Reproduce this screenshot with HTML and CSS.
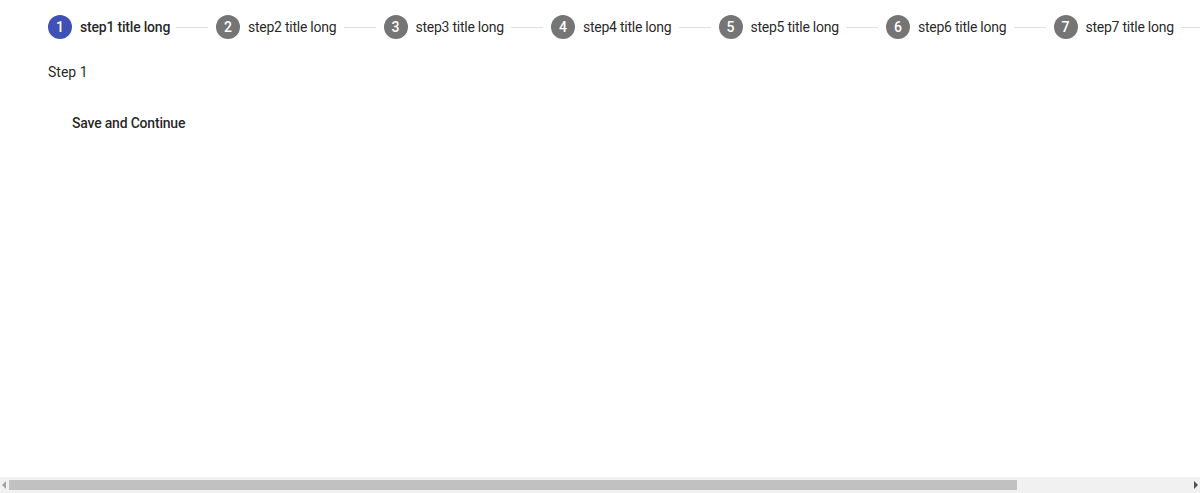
FILE: index.html
```html
<!DOCTYPE html>
<html>
<head>
    <link rel="stylesheet" href="styles.css">
</head>
<body>
    <div class="stepper">
        <div class="stepper-header">
            <div class="step step-selected">
                <div class="step-icon">1</div>
                <div class="step-label">step1 title long</div>
            </div>
            <div class="step-line"></div>
            <div class="step">
                <div class="step-icon">2</div>
                <div class="step-label">step2 title long</div>
            </div>
            <div class="step-line"></div>
            <div class="step">
                <div class="step-icon">3</div>
                <div class="step-label">step3 title long</div>
            </div>
            <div class="step-line"></div>
            <div class="step">
                <div class="step-icon">4</div>
                <div class="step-label">step4 title long</div>
            </div>
            <div class="step-line"></div>
            <div class="step">
                <div class="step-icon">5</div>
                <div class="step-label">step5 title long</div>
            </div>
            <div class="step-line"></div>
            <div class="step">
                <div class="step-icon">6</div>
                <div class="step-label">step6 title long</div>
            </div>
            <div class="step-line"></div>
            <div class="step">
                <div class="step-icon">7</div>
                <div class="step-label">step7 title long</div>
            </div>
            <div class="step-line"></div>
        </div>

        <div class="step-content">
            <div class="step-text">Step 1</div>
            <div class="step-actions">
                <button class="btn" type="button">Save and Continue</button>
            </div>
        </div>
    </div>

    <!-- horizontal scrollbar of the page -->
    <div class="hscroll">
        <span class="hscroll-arrow hscroll-left"></span>
        <div class="hscroll-track">
            <div class="hscroll-thumb"></div>
        </div>
        <span class="hscroll-arrow hscroll-right"></span>
    </div>
</body>
</html>
```

FILE: styles.css
```css
html, body {
    margin: 0;
    height: 100%;
    overflow: hidden;
    background-color: #fff;
}
body {
    font-family: Roboto, "Liberation Sans", sans-serif;
    font-size: 14px;
    color: rgba(0, 0, 0, .87);
}
.stepper {
    width: 1408px;
}
.stepper-header {
    display: flex;
    align-items: center;
    height: 54px;
    padding: 0 24px;
}
.step {
    display: flex;
    align-items: center;
    flex-shrink: 0;
    padding: 0 24px;
    height: 54px;
}
.step-icon {
    width: 24px;
    height: 24px;
    border-radius: 50%;
    background-color: rgba(0, 0, 0, .54);
    color: #fff;
    font-size: 14px;
    font-weight: 500;
    display: flex;
    align-items: center;
    justify-content: center;
    margin-right: 8px;
}
.step-selected .step-icon {
    background-color: #3f51b5;
}
.step-label {
    white-space: nowrap;
    line-height: 20px;
    width: 87.5px;
    letter-spacing: -0.25px;
}
.step-selected .step-label {
    font-weight: 500;
    width: 90px;
    letter-spacing: -0.2px;
}
.step-line {
    flex: 0 0 32px;
    margin: 0 -16px;
    border-top: 1px solid rgba(0, 0, 0, .12);
}
.step-selected + .step-line {
    margin-left: -18px;
}
.step-content {
    padding: 8px 48px 24px;
}
.step-text {
    line-height: 20px;
}
.step-actions {
    margin-top: 23px;
}
.btn {
    font-family: inherit;
    font-size: 14px;
    font-weight: 500;
    letter-spacing: -0.2px;
    color: rgba(0, 0, 0, .87);
    background: transparent;
    border: 0;
    height: 36px;
    padding: 0 16px;
    margin-left: 8px;
    cursor: pointer;
}

/* scrollbar */
.hscroll {
    position: fixed;
    left: 0;
    right: 0;
    bottom: 0;
    height: 16px;
    display: flex;
    align-items: center;
    background-color: #f1f1f1;
}
.hscroll-track {
    flex: 1;
    height: 10px;
    padding: 0 1px;
}
.hscroll-thumb {
    width: 1008px;
    height: 100%;
    background-color: #c1c1c1;
}
.hscroll-arrow {
    width: 8px;
    display: flex;
    justify-content: center;
}
.hscroll-arrow::before {
    content: "";
    border-top: 4px solid transparent;
    border-bottom: 4px solid transparent;
}
.hscroll-left::before {
    border-right: 4px solid #a3a3a3;
}
.hscroll-right::before {
    border-left: 4px solid #505050;
}
```
